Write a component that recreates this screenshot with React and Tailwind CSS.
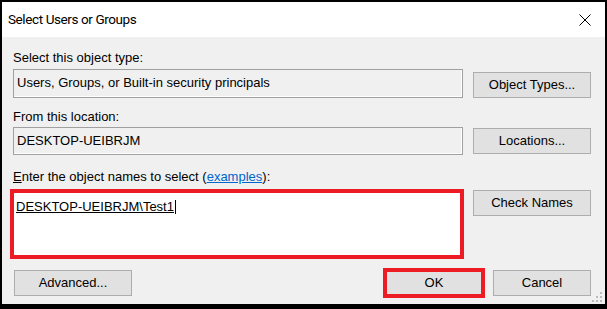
import React from "react";

const font = "font-['Liberation_Sans',Arial,sans-serif]";

const WinButton = ({ children, className = "" }) => (
  <div
    className={`h-[26px] flex items-center justify-center bg-[#e1e1e1] border border-[#adadad] text-[13px] text-black ${className}`}
  >
    {children}
  </div>
);

const ReadOnlyBox = ({ value, className = "" }) => (
  <div
    className={`w-[450px] border border-[#a0a0a0] bg-[#f0f0f0] shadow-[inset_-1px_-1px_0_#ffffff] pl-[3px] pt-[5px] text-[13px] leading-4 text-black ${className}`}
  >
    {value}
  </div>
);

const Grip = () => (
  <svg width="12" height="12" viewBox="0 0 12 12" className="absolute right-[1px] bottom-0">
    {/* resize grip dots */}
    <rect x="8" y="0" width="2" height="2" fill="#bcbcbc" />
    <rect x="4" y="4" width="2" height="2" fill="#bcbcbc" />
    <rect x="8" y="4" width="2" height="2" fill="#bcbcbc" />
    <rect x="0" y="8" width="2" height="2" fill="#bcbcbc" />
    <rect x="4" y="8" width="2" height="2" fill="#bcbcbc" />
    <rect x="8" y="8" width="2" height="2" fill="#bcbcbc" />
  </svg>
);

const App = () => {
  return (
    <div className={`w-[607px] h-[309px] bg-black pl-[2px] pr-[2px] pt-[2px] pb-[5px] ${font}`}>
      <div className="h-full flex flex-col bg-[#f0f0f0]">
        {/* title bar */}
        <div className="h-[35px] shrink-0 bg-white flex items-center justify-between pl-[6px] pr-[14px]">
          <span className="font-['Roboto',sans-serif] text-[13.5px] tracking-[-0.4px] text-black">
            Select Users or Groups
          </span>
          <svg width="12" height="12" viewBox="0 0 12 12">
            <path d="M0.5 0.5 L11.5 11.5 M11.5 0.5 L0.5 11.5" stroke="#000" strokeWidth="1" />
          </svg>
        </div>

        {/* body */}
        <div className="relative flex-1 pl-[11px] pr-[14px]">
          <div className="mt-[13px] h-4 text-[13px] leading-4 text-black">
            Select this object type:
          </div>
          <div className="mt-[3px] flex gap-[10px]">
            <ReadOnlyBox value="Users, Groups, or Built-in security principals" className="h-[29px]" />
            <WinButton className="w-[118px] mt-[3px]">Object Types...</WinButton>
          </div>

          <div className="mt-[11px] h-4 text-[13px] leading-4 text-black">
            From this location:
          </div>
          <div className="mt-[2px] flex gap-[10px]">
            <ReadOnlyBox value="DESKTOP-UEIBRJM" className="h-[28px]" />
            <WinButton className="w-[118px] mt-[1px]">Locations...</WinButton>
          </div>

          <div className="mt-[14px] h-4 text-[13px] leading-4 text-black">
            <span className="underline">E</span>nter the object names to select (
            <span className="text-[#0066cc] underline">examples</span>):
          </div>
          <div className="mt-[4px] flex">
            <div className="-ml-[3px] w-[454px] h-[70px] border-[4px] border-[#ed1c24] bg-white pl-[2px] pt-[1px]">
              <span className="inline-block text-[13px] leading-[14px] text-black underline border-r border-black pr-[1px]">
                DESKTOP-UEIBRJM\Test1
              </span>
            </div>
            <WinButton className="w-[118px] ml-[9px] mt-[1px]">Check Names</WinButton>
          </div>

          <div className="mt-[9px] flex items-center justify-between">
            <WinButton className="w-[118px] ml-[1px]">Advanced...</WinButton>
            <div className="flex items-center gap-[8px]">
              <div className="w-[102px] h-[30px] flex items-center justify-center bg-[#e1e1e1] border-[4px] border-[#ed1c24] text-[13px] text-black">
                OK
              </div>
              <WinButton className="w-[98px]">Cancel</WinButton>
            </div>
          </div>

          <Grip />
        </div>
      </div>
    </div>
  );
};

export default App;
